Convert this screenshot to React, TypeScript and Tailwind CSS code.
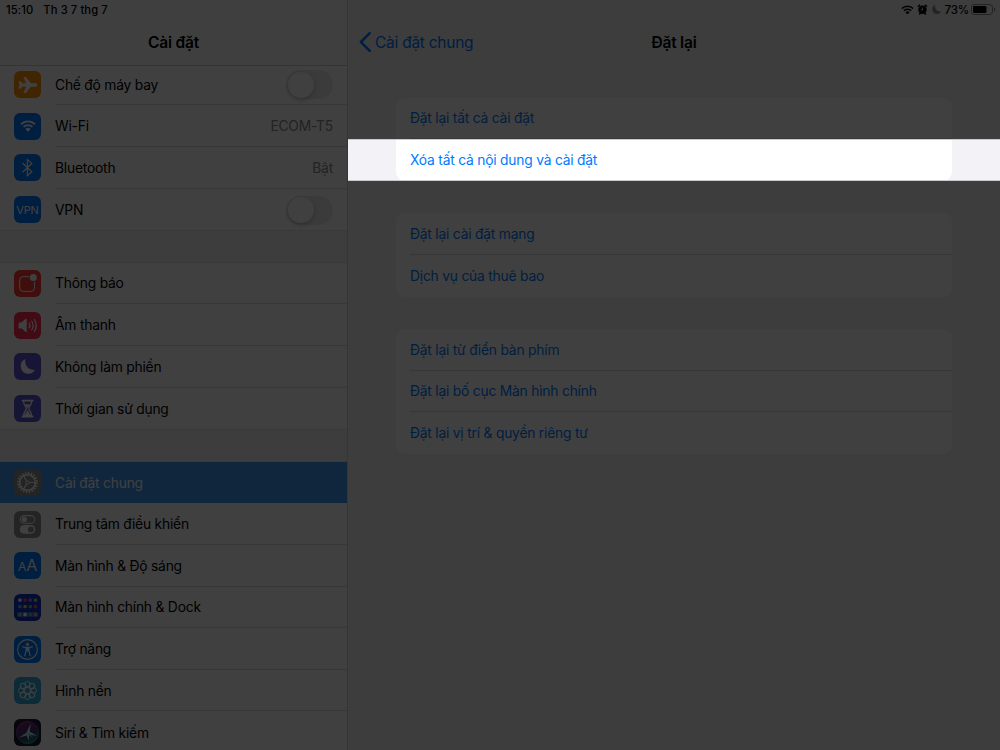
import type { ReactNode } from "react";
import clsx from "clsx";
import { IoAirplane } from "react-icons/io5";

function WifiIcon({ className }: { className?: string }) {
  return (
    <svg viewBox="0 0 20 15" className={className} fill="none" stroke="currentColor" strokeWidth="2.3">
      <path d="M1.3 5.3a12.4 12.4 0 0 1 17.4 0" />
      <path d="M4.4 8.7a8 8 0 0 1 11.2 0" />
      <path d="M10 14.6 6.7 11.3a4.7 4.7 0 0 1 6.6 0z" fill="currentColor" stroke="none" />
    </svg>
  );
}

function BluetoothIcon() {
  return (
    <svg viewBox="0 0 27 27" className="size-[27px]" fill="none" stroke="white" strokeWidth="1.2">
      <path d="m8.6 9 9.2 8.8-4.4 3.8V5.6l4.4 3.8L8.6 18.2" />
    </svg>
  );
}

function NotificationIcon() {
  return (
    <svg viewBox="0 0 27 27" className="size-[27px]">
      <rect x="5.7" y="6.6" width="14.8" height="14.8" rx="3.4" fill="none" stroke="white" strokeWidth="1" />
      <circle cx="19.3" cy="7.6" r="4.4" fill="#ff3b30" />
      <circle cx="19.3" cy="7.6" r="3.5" fill="white" />
    </svg>
  );
}

function SoundIcon() {
  return (
    <svg viewBox="0 0 27 27" className="size-[27px]" fill="none" stroke="white" strokeWidth="1.2" strokeLinecap="round">
      <path d="M5.2 11h2.6l4.3-3.7v12.2l-4.3-3.6H5.2z" fill="white" strokeLinejoin="round" />
      <path d="M15.3 11.2a4.5 4.5 0 0 1 0 4.6M17.8 9.2a8 8 0 0 1 0 8.6M20.4 7.5a11.5 11.5 0 0 1 0 12" />
    </svg>
  );
}

function MoonIcon({ className }: { className?: string }) {
  return (
    <svg viewBox="0 0 27 27" className={className} fill="currentColor">
      <path d="M11.5 6.1a8.4 8.4 0 0 0 9.3 10.6 7.3 7.3 0 0 1-7 4.1 7.4 7.4 0 0 1-7.1-7.5 7.6 7.6 0 0 1 4.8-7.2z" />
    </svg>
  );
}

function HourglassIcon() {
  return (
    <svg viewBox="0 0 27 27" className="size-[27px]" stroke="white" strokeLinecap="round">
      <path d="M8.6 5.6h10M8.6 21.5h10" strokeWidth="1.9" />
      <path
        d="M9.6 6.5c0 4 2.7 5 2.7 7s-2.7 3.1-2.7 7h8c0-3.9-2.7-5-2.7-7s2.7-3 2.7-7"
        fill="none"
        strokeWidth="1.3"
      />
      <path d="M11.2 9.4h4.8l-2.4 3.7zM13.6 15.2l3 5.4h-6z" fill="white" strokeWidth="0.3" />
    </svg>
  );
}

function GearIcon() {
  return (
    <svg viewBox="0 0 27 27" className="size-[27px]" fill="none" stroke="white">
      <circle cx="13.5" cy="13.5" r="9.4" strokeWidth="2" strokeDasharray="1.55 1.403" />
      <circle cx="13.5" cy="13.5" r="7.8" strokeWidth="1.6" />
      <circle cx="13.5" cy="13.5" r="1.7" strokeWidth="1" />
      <path d="M15.2 13.5h5.6M12.6 12 9.6 6.9M12.6 15l-3 5.1" strokeWidth="1.1" />
    </svg>
  );
}

function ControlCenterIcon() {
  return (
    <svg viewBox="0 0 27 27" className="size-[27px]">
      <rect x="6.3" y="4.6" width="14.5" height="7.6" rx="3.8" fill="none" stroke="white" strokeWidth="1.1" />
      <circle cx="10.4" cy="8.4" r="2.6" fill="white" />
      <rect x="5.8" y="14" width="15.5" height="8.8" rx="4.4" fill="white" />
      <circle cx="16.9" cy="18.4" r="2.9" fill="#8e8e93" />
    </svg>
  );
}

const appColors = [
  ["#ffffff", "#ff3b6b", "#b067e8", "#a8d35a"],
  ["#35b8e8", "#ffcc00", "#34c77b", "#ff4b3a"],
  ["#4cd976", "#ffffff", "#35b8c8", "#ff8a4a"],
];

function HomeScreenIcon() {
  return (
    <svg viewBox="0 0 27 27" className="size-[27px]">
      <rect x="3" y="17.9" width="21" height="5.2" rx="1" fill="#5c7ae0" opacity="0.7" />
      {appColors.map((row, y) =>
        row.map((color, x) => (
          <rect
            key={`${x}-${y}`}
            x={4.2 + x * 5.2}
            y={4.4 + y * 6.5 + (y === 2 ? 1.4 : 0)}
            width="3.4"
            height="3.4"
            rx="1"
            fill={color}
          />
        ))
      )}
    </svg>
  );
}

function AccessibilityIcon() {
  return (
    <svg viewBox="0 0 27 27" className="size-[27px]" fill="none" stroke="white">
      <circle cx="13.5" cy="13.5" r="9.9" strokeWidth="1.1" />
      <circle cx="13.5" cy="8.2" r="1.5" fill="white" stroke="none" />
      <path d="m8.6 10.9 3.6.6h2.6l3.6-.6" strokeWidth="1.2" strokeLinecap="round" />
      <path d="M12.1 11.3h2.8v3.5l1.4 5M12.1 11.3v3.5l-1.4 5" strokeWidth="1.2" strokeLinecap="round" />
      <path d="M12.1 11.3h2.8v4.3h-2.8z" fill="white" stroke="none" />
    </svg>
  );
}

function WallpaperIcon() {
  return (
    <svg viewBox="0 0 27 27" className="size-[27px]" fill="none" stroke="white" strokeWidth="1">
      {[0, 45, 90, 135, 180, 225, 270, 315].map((angle) => (
        <circle key={angle} cx="13.5" cy="7.2" r="2.7" transform={`rotate(${angle} 13.5 13.5)`} />
      ))}
      <circle cx="13.5" cy="13.5" r="3.1" />
    </svg>
  );
}

function SiriIcon() {
  return (
    <svg viewBox="0 0 27 27" className="size-[27px]">
      <defs>
        <linearGradient id="siri" x1="0.3" y1="0" x2="0.7" y2="1">
          <stop offset="0" stopColor="#b03a90" />
          <stop offset="0.35" stopColor="#8a3aa0" />
          <stop offset="0.6" stopColor="#3d5a90" />
          <stop offset="1" stopColor="#20c0a0" />
        </linearGradient>
      </defs>
      <circle cx="13.5" cy="13.5" r="11" fill="url(#siri)" opacity="0.55" />
      <circle cx="13.5" cy="13.5" r="11" fill="none" stroke="url(#siri)" strokeWidth="1" />
      <path d="M16.8 4.6 15.6 12.4l7.3 4.4-8-1 .3 6.4-2.6-5.6-7.9 2.2 7.6-5z" fill="#c4ecf0" />
      <path d="m14.5 14 5.2 5.6-5.6-3.6z" fill="#49e0d0" />
    </svg>
  );
}

type Item = {
  label: string;
  icon: ReactNode;
  color: string;
  value?: string;
  toggle?: boolean;
  selected?: boolean;
};

const groups: Item[][] = [
  [
    { label: "Chế độ máy bay", icon: <IoAirplane className="size-[20px] text-white" />, color: "bg-[#ff9500]", toggle: true },
    { label: "Wi-Fi", icon: <WifiIcon className="w-[16px] text-white" />, color: "bg-[#007aff]", value: "ECOM-T5" },
    { label: "Bluetooth", icon: <BluetoothIcon />, color: "bg-[#007aff]", value: "Bật" },
    {
      label: "VPN",
      icon: <span className="text-[11px] tracking-[-0.2px] text-white">VPN</span>,
      color: "bg-[#007aff]",
      toggle: true,
    },
  ],
  [
    { label: "Thông báo", icon: <NotificationIcon />, color: "bg-[#ff3b30]" },
    { label: "Âm thanh", icon: <SoundIcon />, color: "bg-[#ff2d55]" },
    { label: "Không làm phiền", icon: <MoonIcon className="size-[27px] text-white" />, color: "bg-[#5856d6]" },
    { label: "Thời gian sử dụng", icon: <HourglassIcon />, color: "bg-[#5856d6]" },
  ],
  [
    { label: "Cài đặt chung", icon: <GearIcon />, color: "bg-[#8e8e93]", selected: true },
    { label: "Trung tâm điều khiển", icon: <ControlCenterIcon />, color: "bg-[#8e8e93]" },
    {
      label: "Màn hình & Độ sáng",
      icon: (
        <span className="flex items-baseline text-white">
          <span className="text-[12px]">A</span>
          <span className="text-[16px]">A</span>
        </span>
      ),
      color: "bg-[#007aff]",
    },
    { label: "Màn hình chính & Dock", icon: <HomeScreenIcon />, color: "bg-[#1433c8]" },
    { label: "Trợ năng", icon: <AccessibilityIcon />, color: "bg-[#007aff]" },
    { label: "Hình nền", icon: <WallpaperIcon />, color: "bg-[#34aadc]" },
    { label: "Siri & Tìm kiếm", icon: <SiriIcon />, color: "bg-[#1b1830]" },
  ],
];

const resetGroups = [
  ["Đặt lại tất cả cài đặt", "Xóa tất cả nội dung và cài đặt"],
  ["Đặt lại cài đặt mạng", "Dịch vụ của thuê bao"],
  ["Đặt lại từ điển bàn phím", "Đặt lại bố cục Màn hình chính", "Đặt lại vị trí & quyền riêng tư"],
];

function Toggle() {
  return (
    <span className="flex h-[29px] w-[47px] items-center rounded-full bg-[#e9e9eb] p-[1.5px]">
      <span className="size-[26px] rounded-full bg-white shadow-[0_2px_5px_rgba(0,0,0,0.2)]" />
    </span>
  );
}

function SidebarRow({ item, last }: { item: Item; last: boolean }) {
  return (
    <div className={clsx("flex h-[41.67px] items-center pl-[14px]", item.selected && "bg-[#3c96f0]")}>
      <span
        className={clsx("flex size-[27px] shrink-0 items-center justify-center overflow-hidden rounded-[6px]", item.color)}
      >
        {item.icon}
      </span>
      <div
        className={clsx(
          "ml-[14px] flex h-full flex-1 items-center justify-between pt-[1px] pr-[14px]",
          !last && !item.selected && "border-b border-[#dcdcde]"
        )}
      >
        <span className={clsx(item.selected && "text-white")}>{item.label}</span>
        {item.value && <span className="text-[#8a8a8e]">{item.value}</span>}
        {item.toggle && <Toggle />}
      </div>
    </div>
  );
}

function Sidebar() {
  return (
    <aside className="flex h-full w-[348px] shrink-0 flex-col overflow-hidden border-r border-[#d4d4d8] bg-[#f2f2f7]">
      <header className="relative z-10 flex h-[66px] shrink-0 flex-col border-b border-[#d0d0d4] bg-[#fafafa]">
        <div className="flex h-[19px] items-center gap-[10px] pl-[6px] text-[11.2px] font-medium tracking-[0.1px]">
          <span>15:10</span>
          <span>Th 3 7 thg 7</span>
        </div>
        <h1 className="mt-[12px] text-center text-[15.5px] leading-6 font-semibold">Cài đặt</h1>
      </header>
      <div className="-mt-[2.3px] flex flex-col gap-[32.3px]">
        {groups.map((group, i) => (
          <div
            key={i}
            className="shrink-0 bg-white shadow-[0_-1px_0_#e2e2e5,0_1px_0_#e2e2e5]"
          >
            {group.map((item, j) => (
              <SidebarRow key={item.label} item={item} last={j === group.length - 1} />
            ))}
          </div>
        ))}
      </div>
    </aside>
  );
}

function StatusIcons() {
  return (
    <div className="flex h-[19px] items-center justify-end pr-[4px] text-[11.5px] font-medium">
      <WifiIcon className="w-[13px]" />
      <svg viewBox="0 0 12 12" className="ml-[3px] size-[11px]">
        <circle cx="6" cy="6.3" r="4.6" />
        <path d="M1.2 3 3.2 1M10.8 3l-2-2M2.5 11.4l1.2-1.5M9.5 11.4 8.3 9.9" stroke="black" strokeWidth="1.7" />
        <path d="M6 3.8v2.7H4" fill="none" stroke="#f2f2f7" strokeWidth="0.9" />
      </svg>
      <MoonIcon className="-mr-[3px] size-[17px] text-[#8e8e93]" />
      <span className="ml-[3px]">73%</span>
      <svg viewBox="0 0 25 11" className="ml-[2px] h-[11px] w-[25px]">
        <rect x="0.5" y="0.5" width="21" height="10" rx="2.8" fill="none" stroke="#8a8a8e" />
        <rect x="2" y="2" width="13.5" height="7" rx="1.4" />
        <path d="M23 3.6v3.8c.8-.3 1.3-1 1.3-1.9s-.5-1.6-1.3-1.9z" fill="#8a8a8e" />
      </svg>
    </div>
  );
}

function ResetPanel() {
  return (
    <main className="h-full flex-1 bg-[#f2f2f7]">
      <StatusIcons />
      <div className="grid h-[46px] grid-cols-3 items-center pl-[11px]">
        <button className="flex items-center text-[15.5px] tracking-[-0.25px] text-[#007aff]">
          <svg viewBox="0 0 12 20" className="mr-[4px] h-[20px] w-[12px]" fill="none" stroke="currentColor" strokeWidth="2.5">
            <path d="m10.7 1.2-8.8 8.8 8.8 8.8" strokeLinecap="round" strokeLinejoin="round" />
          </svg>
          <span className="pt-[1px] whitespace-nowrap">Cài đặt chung</span>
        </button>
        <h2 className="-ml-[11px] pt-[1px] text-center text-[15.5px] font-semibold">Đặt lại</h2>
      </div>
      <div className="mt-[32.5px] flex flex-col gap-[32.4px] px-[48px] text-[#007aff]">
        {resetGroups.map((group) => (
          <div key={group[0]} className="rounded-[9px] bg-white pl-[14px]">
            {group.map((label, i) => (
              <div
                key={label}
                className={clsx(
                  "flex h-[41.67px] items-center",
                  i < group.length - 1 && "border-b border-[#dcdcde] pt-[1px]"
                )}
              >
                {label}
              </div>
            ))}
          </div>
        ))}
      </div>
    </main>
  );
}

export default function App() {
  return (
    <div className="relative flex h-[750px] w-[1000px] overflow-hidden font-[Inter,'Liberation_Sans',sans-serif] text-[13.8px] leading-5 tracking-[-0.2px] text-black">
      <Sidebar />
      <ResetPanel />
      {/* Spotlight: dims everything except the erase row */}
      <div className="pointer-events-none absolute top-[139px] left-[348px] z-20 h-[42px] w-[652px] border-y border-[#c9c9ce] shadow-[0_0_0_1000px_rgba(0,0,0,0.75)]" />
    </div>
  );
}
